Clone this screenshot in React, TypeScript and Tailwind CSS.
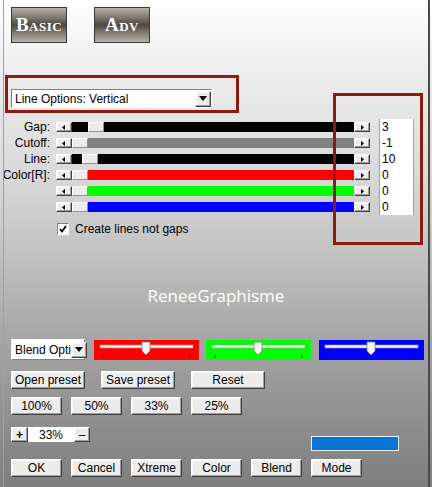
import React from "react";

const font = { fontFamily: '"Liberation Sans", Arial, sans-serif' };

const raised =
  "border border-t-white border-l-white border-r-[#404040] border-b-[#404040] bg-[#ececec] shadow-[inset_-1px_-1px_0_#a0a0a0,inset_1px_1px_0_#f8f8f8]";

function Btn({ label, w }: { label: string; w: string }) {
  return (
    <div className={`${raised} ${w} flex h-[18px] items-center justify-center text-[12px] leading-none text-black`}>
      {label}
    </div>
  );
}

function ArrowBtn({ dir }: { dir: "left" | "right" }) {
  return (
    <div className={`${raised} flex h-[10px] w-[16px] shrink-0 items-center justify-center`}>
      <svg width="4" height="5" viewBox="0 0 4 5">
        {dir === "left" ? <path d="M3 0 L0 2.5 L3 5 Z" fill="#000" /> : <path d="M1 0 L4 2.5 L1 5 Z" fill="#000" />}
      </svg>
    </div>
  );
}

type SliderRow = { label: string; color: string; before: number; value: string };

const rows: SliderRow[] = [
  { label: "Gap:", color: "bg-black", before: 16, value: "3" },
  { label: "Cutoff:", color: "bg-[#808080]", before: 0, value: "-1" },
  { label: "Line:", color: "bg-black", before: 10, value: "10" },
  { label: "Color[R]:", color: "bg-[#ff0000]", before: 0, value: "0" },
  { label: "", color: "bg-[#00ff00]", before: 0, value: "0" },
  { label: "", color: "bg-[#0000ff]", before: 0, value: "0" },
];

function ColorSlider({ bg, thumb }: { bg: string; thumb: number }) {
  return (
    <div className={`${bg} h-[20px] w-[105px]`}>
      <svg width="105" height="20" viewBox="0 0 105 20">
        <rect x="6" y="5" width="93" height="3" fill="#f0f0f0" stroke="#a0a0a0" strokeWidth="0.6" />
        <path
          d={`M${thumb - 4} 2 H${thumb + 4} V11 L${thumb} 15 L${thumb - 4} 11 Z`}
          fill="#f4f4f4"
          stroke="#808080"
          strokeWidth="0.8"
        />
        <line x1="9" y1="15" x2="9" y2="18" stroke="#000" />
        <line x1="96" y1="15" x2="96" y2="18" stroke="#000" />
      </svg>
    </div>
  );
}

export default function App() {
  return (
    <div
      className="relative h-[487px] w-[432px] overflow-hidden bg-[linear-gradient(to_bottom,#ffffff_0%,#eeeeee_14%,#dadada_35%,#c2c2c2_52%,#a8a8a8_68%,#929292_84%,#7e7e7e_100%)] pl-[11px] pt-[7px]"
      style={font}
    >
      {/* window edges */}
      <div className="absolute left-[3px] top-0 h-full w-px bg-[#a0a0a0]" />
      <div className="absolute left-[428px] top-0 h-full w-[2px] bg-[#4a4a4a]" />

      {/* tabs */}
      <div className="flex gap-[27px]">
        {["Basic", "Adv"].map((t) => (
          <div
            key={t}
            className="flex h-[36px] w-[56px] items-center justify-center border border-[#3a3a3a] bg-[linear-gradient(to_bottom,#b4b0a8_0%,#7a766e_30%,#4c4842_50%,#7a766e_70%,#b4b0a8_100%)] text-[19px] font-semibold tracking-[0.5px] text-white [font-variant:small-caps]"
            style={{ fontFamily: '"Liberation Serif", "Times New Roman", serif' }}
          >
            {t}
          </div>
        ))}
      </div>

      {/* line options */}
      <div className="ml-[-6px] mt-[32px] h-[38px] w-[234px] border-[3px] border-[#8d1b10] pl-[3px] pt-[11px]">
        <div className="flex h-[19px] w-[201px] items-center border border-t-[#808080] border-l-[#808080] border-r-white border-b-white bg-white pl-[3px] text-[12px]">
          <span className="flex-1">Line Options: Vertical</span>
          <div className={`${raised} flex h-[16px] w-[16px] items-center justify-center`}>
            <svg width="8" height="5" viewBox="0 0 8 5">
              <path d="M0 0 H8 L4 5 Z" fill="#000" />
            </svg>
          </div>
        </div>
      </div>

      {/* sliders */}
      <div className="mt-[6px] flex flex-col">
        {rows.map((r, i) => (
          <div key={i} className="flex h-[16px] items-center">
            <div className="ml-[-11px] w-[50px] text-right text-[12px] leading-none">{r.label}</div>
            <div className="ml-[6px] flex items-center">
              <ArrowBtn dir="left" />
              <div className={`${r.color} flex h-[10px] w-[282px]`}>
                <div style={{ width: r.before }} />
                <div className="h-[10px] w-[16px] border border-t-white border-l-white border-r-[#909090] border-b-[#909090] bg-[#ececec]" />
              </div>
              <ArrowBtn dir="right" />
            </div>
            <div className="ml-[9px] flex h-[16px] w-[35px] items-center border-x border-[#a0a0a0] bg-white pl-[2px] text-[12px]">
              {r.value}
            </div>
          </div>
        ))}
      </div>

      <div className="ml-[46px] mt-[5px] flex items-center gap-[6px] text-[12px]">
        <div className="flex h-[12px] w-[12px] items-center justify-center border border-t-[#808080] border-l-[#808080] border-r-white border-b-white bg-white">
          <svg width="8" height="8" viewBox="0 0 8 8">
            <path d="M1 4 L3 6.5 L7 1" fill="none" stroke="#000" strokeWidth="1.8" />
          </svg>
        </div>
        <span>Create lines not gaps</span>
      </div>

      <div
        className="ml-[-11px] mt-[48px] text-center text-[17px] leading-[20px] text-white"
        style={{ fontFamily: '"Open Sans", "Noto Sans", sans-serif' }}
      >
        ReneeGraphisme
      </div>

      {/* blend row */}
      <div className="mt-[33px] flex items-center">
        <div className="flex h-[21px] w-[74px] items-center border border-t-white border-l-white border-r-[#808080] border-b-[#808080] bg-white pl-[3px] text-[12px]">
          <span className="flex-1 whitespace-nowrap">Blend Opti</span>
          <div className={`${raised} flex h-[16px] w-[16px] shrink-0 items-center justify-center`}>
            <svg width="8" height="5" viewBox="0 0 8 5">
              <path d="M0 0 H8 L4 5 Z" fill="#000" />
            </svg>
          </div>
        </div>
        <div className="ml-[9px]">
          <ColorSlider bg="bg-[#ff0000]" thumb={52} />
        </div>
        <div className="ml-[7px]">
          <ColorSlider bg="bg-[#00ff00]" thumb={52} />
        </div>
        <div className="ml-[8px]">
          <ColorSlider bg="bg-[#0000ff]" thumb={52} />
        </div>
      </div>

      <div className="mt-[11px] flex gap-[16px]">
        <Btn label="Open preset" w="w-[74px]" />
        <Btn label="Save preset" w="w-[74px]" />
        <Btn label="Reset" w="w-[74px]" />
      </div>

      <div className="mt-[8px] flex gap-[9px]">
        {["100%", "50%", "33%", "25%"].map((l) => (
          <Btn key={l} label={l} w="w-[51px]" />
        ))}
      </div>

      <div className="mt-[12px] flex items-start">
        <div className={`${raised} flex h-[15px] w-[17px] items-center justify-center text-[12px] font-bold leading-none`}>+</div>
        <div className="flex h-[15px] w-[46px] items-center justify-center bg-white text-[12px]">33%</div>
        <div className={`${raised} flex h-[15px] w-[16px] items-center justify-center text-[12px] leading-none`}>–</div>
        <div className="ml-[221px] mt-[9px] h-[15px] w-[88px] border border-[#e8f0ff] bg-[#0a74d4]" />
      </div>

      <div className="mt-[8px] flex gap-[9px]">
        {["OK", "Cancel", "Xtreme", "Color", "Blend", "Mode"].map((l) => (
          <Btn key={l} label={l} w="w-[51px]" />
        ))}
      </div>

      {/* annotation boxes */}
      <div className="absolute left-[333px] top-[93px] h-[152px] w-[90px] border-[3px] border-[#8d1b10]" />
    </div>
  );
}
